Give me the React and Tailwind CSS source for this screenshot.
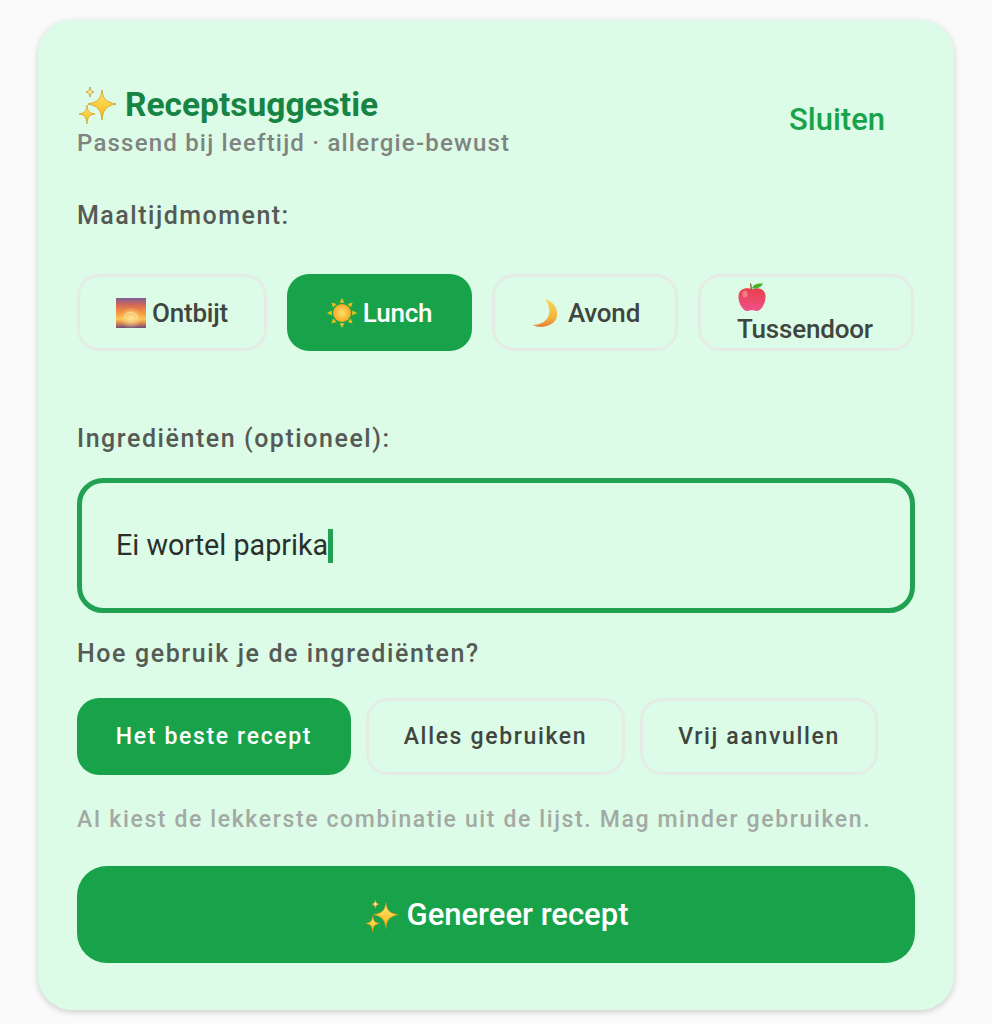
import React from "react";

const Sparkles = ({ className }) => (
  <svg viewBox="0 0 40 40" className={className}>
    <defs>
      <linearGradient id="spk" x1="0" y1="0" x2="0" y2="1">
        <stop offset="0" stopColor="#ffe873" />
        <stop offset="1" stopColor="#f6b60f" />
      </linearGradient>
    </defs>
    <path d="M25 5 C26 14 29 17 39 19 C29 21 26 25 25 35 C24 25 21 21 11 19 C21 17 24 14 25 5Z" fill="url(#spk)" stroke="#d08f12" strokeWidth=".7" />
    <path d="M10 20 C10.6 26 12 28 18 29 C12 30 10.6 32 10 39 C9.4 32 8 30 2 29 C8 28 9.4 26 10 20Z" fill="url(#spk)" stroke="#d08f12" strokeWidth=".6" />
    <path d="M13 2 C13.3 5 14.3 6.3 17 7 C14.3 7.7 13.3 9 13 12 C12.7 9 11.7 7.7 9 7 C11.7 6.3 12.7 5 13 2Z" fill="#fde88f" stroke="#c08c20" strokeWidth=".7" />
  </svg>
);

const Sunrise = ({ className }) => (
  <svg viewBox="0 0 30 30" className={className}>
    <defs>
      <linearGradient id="sky" x1="0" y1="0" x2="0" y2="1">
        <stop offset="0" stopColor="#7a6095" />
        <stop offset=".22" stopColor="#d0675a" />
        <stop offset=".45" stopColor="#f28f3c" />
        <stop offset=".7" stopColor="#fcc552" />
        <stop offset=".82" stopColor="#e58f4b" />
        <stop offset="1" stopColor="#6d4c7c" />
      </linearGradient>
      <radialGradient id="glow">
        <stop offset="0" stopColor="#fde7a0" stopOpacity=".9" />
        <stop offset="1" stopColor="#fde7a0" stopOpacity="0" />
      </radialGradient>
    </defs>
    <rect width="30" height="30" fill="url(#sky)" />
    <circle cx="15" cy="20" r="11" fill="url(#glow)" />
    <path d="M9 20 A6 6 0 0 1 21 20" fill="none" stroke="#fce9a8" strokeWidth=".9" />
  </svg>
);

const Sun = ({ className }) => {
  const rays = [0, 45, 90, 135, 180, 225, 270, 315];
  return (
    <svg viewBox="0 0 30 30" className={className}>
      <defs>
        <radialGradient id="sunC">
          <stop offset="0" stopColor="#fde16a" />
          <stop offset="1" stopColor="#f7a823" />
        </radialGradient>
      </defs>
      {rays.map((r) => (
        <path key={r} d="M15 0 L17.4 4.8 L12.6 4.8Z" fill="#e3c21d" transform={`rotate(${r} 15 15)`} />
      ))}
      <circle cx="15" cy="15" r="9" fill="url(#sunC)" />
    </svg>
  );
};

const Moon = ({ className }) => (
  <svg viewBox="0 0 30 30" className={className}>
    <defs>
      <linearGradient id="mn" x1="0" y1="0" x2="0" y2="1">
        <stop offset="0" stopColor="#fbd65c" />
        <stop offset=".65" stopColor="#f5b53a" />
        <stop offset="1" stopColor="#ea7d3c" />
      </linearGradient>
    </defs>
    <path d="M15 1 C24 3.5 29 12 26.5 20 C23.5 27.5 12 31.5 2.5 27 C11 27 17.5 23 19 16 C20 10.5 18.5 5.5 15 1Z" fill="url(#mn)" />
  </svg>
);

const Apple = ({ className }) => (
  <svg viewBox="0 0 30 30" className={className}>
    <defs>
      <linearGradient id="apl" x1="0" y1="0" x2="0" y2="1">
        <stop offset="0" stopColor="#e8404a" />
        <stop offset="1" stopColor="#f0508a" />
      </linearGradient>
    </defs>
    <path d="M15 7.5 C19 5 28 5.5 28.5 14 C29 21 24 29 20 29 C18 29 16.5 28 15 28 C13.5 28 12 29 10 29 C6 29 1 21 1.5 14 C2 5.5 11 5 15 7.5Z" fill="url(#apl)" />
    <path d="M14.5 7.5 L13.5 1.5" stroke="#7a4a20" strokeWidth="1.2" />
    <path d="M15 6.5 C16 2 21 1 26 1.5 C25 5 20 7 15 6.5Z" fill="#4caf2f" />
    <ellipse cx="8" cy="12" rx="2.6" ry="3.6" fill="#f7a3a8" opacity=".6" />
  </svg>
);

const Chip = ({ active, className = "", children }) => (
  <div
    className={`h-[77px] rounded-[22px] flex items-center justify-center text-[26px] font-medium tracking-[-0.2px] leading-[30px] ${
      active
        ? "bg-[#18a34a] text-white"
        : "border-[3px] border-[#e5ece6] text-[#404540]"
    } ${className}`}
  >
    {children}
  </div>
);

const Mode = ({ active, className = "", children }) => (
  <div
    className={`h-[77px] rounded-[22px] flex items-center justify-center pt-[1px] text-[23px] font-medium tracking-[1.65px] ${
      active
        ? "bg-[#18a34a] text-white"
        : "border-[3px] border-[#e5ece6] text-[#404540]"
    } ${className}`}
  >
    {children}
  </div>
);

export default function App() {
  return (
    <div className="w-[992px] h-[1024px] bg-[#fafafa] pt-5 px-[38px] font-['Roboto',sans-serif] overflow-hidden">
      <div className="h-[990px] rounded-[34px] bg-[#dcfce7] shadow-[0_2px_6px_rgba(0,0,0,0.18)] px-[39px] pt-[64px]">
        <div className="flex items-start justify-between h-[78px]">
          <div>
            <div className="flex items-center gap-2 h-[42px]">
              <Sparkles className="w-[40px] h-[40px]" />
              <span className="text-[33.5px] font-bold text-[#178444]">Receptsuggestie</span>
            </div>
            <div className="mt-[1px] text-[24px] leading-[32px] font-medium text-[#7f8480] tracking-[1.2px]">
              Passend bij leeftijd · allergie-bewust
            </div>
          </div>
          <div className="text-[31px] font-medium text-[#18a34a] mr-[30px] mt-[13px]">Sluiten</div>
        </div>

        <div className="mt-[38px] text-[25px] leading-[32px] font-medium text-[#555a55] tracking-[1.5px]">Maaltijdmoment:</div>

        <div className="mt-[42px] flex gap-[20px]">
          <Chip className="w-[190px]">
            <span className="flex items-center gap-[6px]"><Sunrise className="w-[30px] h-[30px]" />Ontbijt</span>
          </Chip>
          <Chip active className="w-[185px]">
            <span className="flex items-center gap-[6px]"><Sun className="w-[30px] h-[30px]" />Lunch</span>
          </Chip>
          <Chip className="w-[186px]">
            <span className="flex items-center gap-[8px]"><Moon className="w-[30px] h-[30px]" />Avond</span>
          </Chip>
          <Chip className="w-[216px]">
            <span className="flex flex-col items-start gap-[2px] w-[138px]">
              <Apple className="w-[30px] h-[30px]" />
              Tussendoor
            </span>
          </Chip>
        </div>

        <div className="mt-[72px] text-[25px] leading-[32px] font-medium text-[#555a55] tracking-[1.55px]">Ingrediënten (optioneel):</div>

        <div className="mt-[23px] h-[135px] rounded-[26px] border-[5px] border-[#23a152] flex items-center pl-[34px]">
          <span className="text-[28.7px] text-[#2a302b]">Ei wortel paprika</span>
          <span className="w-[5px] h-[34px] bg-[#23a152]" />
        </div>

        <div className="mt-[25px] text-[25px] leading-[32px] font-medium text-[#555a55] tracking-[1.6px]">Hoe gebruik je de ingrediënten?</div>

        <div className="mt-[28px] flex gap-[15px]">
          <Mode active className="w-[274px]">Het beste recept</Mode>
          <Mode className="w-[259px]">Alles gebruiken</Mode>
          <Mode className="w-[238px]">Vrij aanvullen</Mode>
        </div>

        <div className="mt-[29px] text-[23px] leading-[32px] font-medium text-[#a3a9a4] tracking-[1.62px] whitespace-nowrap">
          AI kiest de lekkerste combinatie uit de lijst. Mag minder gebruiken.
        </div>

        <div className="mt-[30px] h-[97px] rounded-[30px] bg-[#18a34a] flex items-center justify-center gap-[8px] pt-[1px] text-white text-[31px] font-medium">
          <Sparkles className="w-[35px] h-[35px]" />
          Genereer recept
        </div>
      </div>
    </div>
  );
}
